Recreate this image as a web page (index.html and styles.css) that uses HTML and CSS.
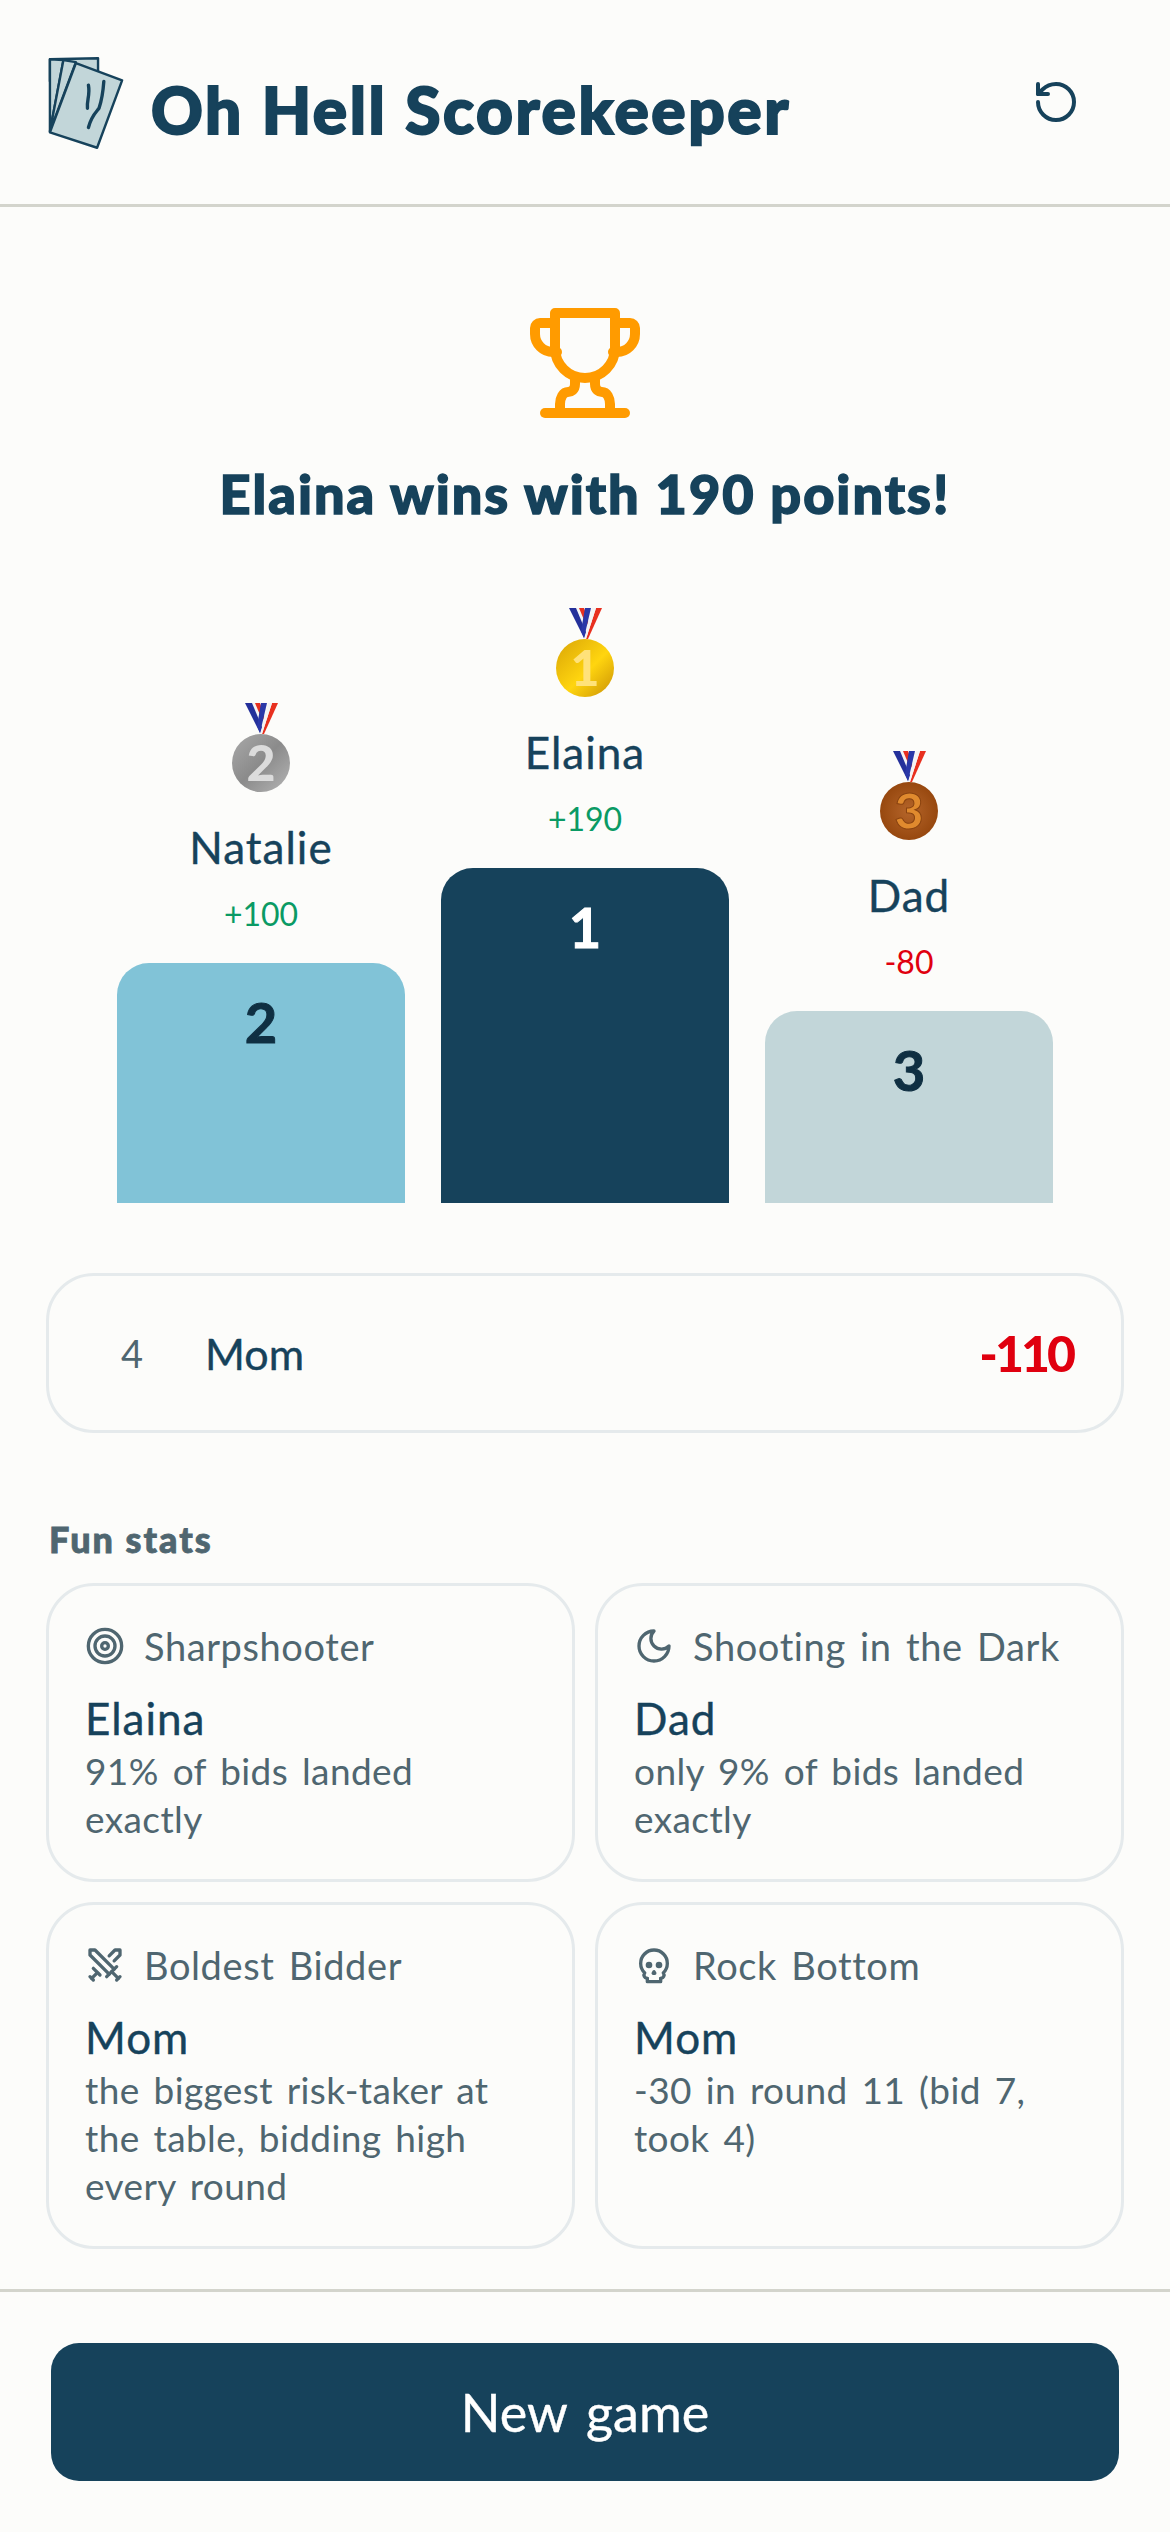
FILE: index.html
```html
<!DOCTYPE html>
<html lang="en">
<head>
  <meta charset="UTF-8" />
  <meta name="viewport" content="width=device-width, initial-scale=1.0"/>
  <title>Oh Hell Scorekeeper</title>
  <link rel="stylesheet" href="styles.css">
</head>
<body>
  <svg class="defs" width="0" height="0" aria-hidden="true">
    <defs>
      <linearGradient id="gold" x1="0" y1="0" x2="1" y2="1">
        <stop offset="0" stop-color="#d9a406"/><stop offset="0.55" stop-color="#ffd50f"/><stop offset="1" stop-color="#c98f04"/>
      </linearGradient>
      <linearGradient id="silver" x1="0" y1="0" x2="1" y2="1">
        <stop offset="0" stop-color="#a9a9a9"/><stop offset="0.5" stop-color="#8b8b8b"/><stop offset="1" stop-color="#b5b5b5"/>
      </linearGradient>
      <radialGradient id="bronze">
        <stop offset="0" stop-color="#b5652a"/><stop offset="1" stop-color="#97480f"/>
      </radialGradient>
      <symbol id="ribbon" viewBox="0 0 60 32">
        <path d="M23 0h6l5 15-3 3z" fill="#e8301f"/>
        <path d="M41 0h6L33 31h-2z" fill="#e8301f"/>
        <path d="M37 0h4L31 31h-3z" fill="#f4f4f4"/>
        <path d="M21 0h3l8 19-1 5z" fill="#f4f4f4"/>
        <path d="M14 0h7l10 24-2 6z" fill="#24309a"/>
        <path d="M30 0h6l-7 30-3-7z" fill="#2a38a8"/>
      </symbol>
    </defs>
  </svg>

  <header class="topbar">
    <div class="brand">
      <svg class="logo" viewBox="0 0 80 96" fill="#c2d6d9" stroke="#16425b" stroke-width="2.5" stroke-linejoin="round">
        <path d="M2 3l50-1v24H2z"/>
        <path d="M20 6l46 16-2 20H4z"/>
        <path d="M2 78V3l14 1z"/>
        <path d="M2 78L16 4l13 2z"/>
        <path d="M29 7l48 18-26 70-49-16z"/>
        <path d="M42 30c2 10-2 16-1 24M58 26c-1 14-3 22-5 28-3 4-8 8-11 20" fill="none" stroke-linecap="round" stroke-width="3.5"/>
      </svg>
      <h1 class="app-title">Oh Hell Scorekeeper</h1>
    </div>
    <svg class="reset" viewBox="0 0 24 24" fill="none" stroke="#16425b" stroke-width="2" stroke-linecap="round" stroke-linejoin="round">
      <path d="M3 12a9 9 0 1 0 9-9 9.75 9.75 0 0 0-6.74 2.74L3 8"/>
      <path d="M3 3v5h5"/>
    </svg>
  </header>

  <main class="content">
    <svg class="trophy" viewBox="0 0 110 110" fill="none" stroke="#ff9b00" stroke-width="10" stroke-linecap="round" stroke-linejoin="round">
      <path d="M25 5H85V40A30 30 0 0 1 25 40Z"/>
      <path d="M25 15H10A5 5 0 0 0 5 20V26A18 18 0 0 0 23 44H27"/>
      <path d="M85 15H100A5 5 0 0 1 105 20V26A18 18 0 0 1 87 44H83"/>
      <path d="M45 70V76C45 82 41 84 38 84C33 84 30 90 30 96V105"/>
      <path d="M65 70V76C65 82 69 84 72 84C77 84 80 90 80 96V105"/>
      <path d="M15 105H95"/>
    </svg>
    <h2 class="winner">Elaina wins with 190 points!</h2>

    <section class="podium">
      <div class="place">
        <svg class="medal" viewBox="0 0 60 90">
          <use href="#ribbon" width="60" height="32"/>
          <circle cx="30" cy="60" r="29" fill="url(#silver)"/>
          <text x="30" y="78" class="medal-num num-silver">2</text>
        </svg>
        <div class="place-name">Natalie</div>
        <div class="place-score pos">+100</div>
        <div class="bar bar-second">2</div>
      </div>
      <div class="place">
        <svg class="medal" viewBox="0 0 60 90">
          <use href="#ribbon" width="60" height="32"/>
          <circle cx="30" cy="60" r="29" fill="url(#gold)"/>
          <text x="30" y="78" class="medal-num num-gold">1</text>
        </svg>
        <div class="place-name">Elaina</div>
        <div class="place-score pos">+190</div>
        <div class="bar bar-first">1</div>
      </div>
      <div class="place">
        <svg class="medal" viewBox="0 0 60 90">
          <use href="#ribbon" width="60" height="32"/>
          <circle cx="30" cy="60" r="29" fill="url(#bronze)"/>
          <text x="30" y="78" class="medal-num num-bronze">3</text>
        </svg>
        <div class="place-name">Dad</div>
        <div class="place-score neg">-80</div>
        <div class="bar bar-third">3</div>
      </div>
    </section>

    <div class="rest-row">
      <span class="rest-rank">4</span>
      <span class="rest-name">Mom</span>
      <span class="rest-score">-110</span>
    </div>

    <h3 class="stats-title">Fun stats</h3>
    <section class="stats">
      <article class="stat">
        <div class="stat-label">
          <svg class="stat-icon" viewBox="0 0 24 24"><circle cx="12" cy="12" r="10"/><circle cx="12" cy="12" r="6"/><circle cx="12" cy="12" r="2"/></svg>
          Sharpshooter
        </div>
        <div class="stat-name">Elaina</div>
        <p class="stat-desc">91% of bids landed exactly</p>
      </article>
      <article class="stat">
        <div class="stat-label">
          <svg class="stat-icon" viewBox="0 0 24 24"><path d="M12 3a6 6 0 0 0 9 9 9 9 0 1 1-9-9Z"/></svg>
          Shooting in the Dark
        </div>
        <div class="stat-name">Dad</div>
        <p class="stat-desc">only 9% of bids landed exactly</p>
      </article>
      <article class="stat">
        <div class="stat-label">
          <svg class="stat-icon" viewBox="0 0 24 24">
            <path d="M14.5 17.5L3 6V3h3l11.5 11.5"/><path d="M13 19l6-6"/><path d="M16 16l4 4"/><path d="M19 21l2-2"/>
            <path d="M14.5 6.5L18 3h3v3l-3.5 3.5"/><path d="M5 14l4 4"/><path d="M7 17l-3 3"/><path d="M3 19l2 2"/>
          </svg>
          Boldest Bidder
        </div>
        <div class="stat-name">Mom</div>
        <p class="stat-desc">the biggest risk-taker at the table, bidding high every round</p>
      </article>
      <article class="stat">
        <div class="stat-label">
          <svg class="stat-icon" viewBox="0 0 24 24">
            <circle cx="9" cy="12" r="1"/><circle cx="15" cy="12" r="1"/><path d="M8 20v2h8v-2"/><path d="M12.5 17l-.5-1-.5 1h1z"/>
            <path d="M16 20a2 2 0 0 0 1.56-3.25 8 8 0 1 0-11.12 0A2 2 0 0 0 8 20"/>
          </svg>
          Rock Bottom
        </div>
        <div class="stat-name">Mom</div>
        <p class="stat-desc">-30 in round 11 (bid 7, took 4)</p>
      </article>
    </section>
  </main>

  <footer class="bottom">
    <button class="new-game">New game</button>
  </footer>
</body>
</html>
```

FILE: styles.css
```css
:root {
  --navy: #16425b;
  --sky: #81c3d7;
  --pale: #c2d6d9;
  --muted: #4f6670;
  --bg: #fcfcfa;
  --line: #e5eaec;
  --rule: #d3d4cc;
  --display: 'Lato', sans-serif;
}

html, body {
  margin: 0;
  height: 2532px;
}

body {
  display: flex;
  flex-direction: column;
  background: var(--bg);
  color: var(--navy);
  font-family: 'Lato', sans-serif;
  overflow: hidden;
}

.defs {
  position: absolute;
}

.topbar {
  flex: none;
  box-sizing: border-box;
  height: 207px;
  display: flex;
  align-items: center;
  justify-content: space-between;
  padding: 0 90px 0 48px;
  border-bottom: 3px solid var(--rule);
}

.brand {
  display: flex;
  align-items: center;
  gap: 26px;
}

.logo {
  width: 77px;
  height: 95px;
}

.app-title {
  margin: 14px 0 0;
  font-family: var(--display);
  font-weight: 900;
  font-size: 64px;
  letter-spacing: 2.6px;
  -webkit-text-stroke: 2px var(--navy);
}

.reset {
  width: 48px;
  height: 48px;
}

.content {
  flex: 1;
  display: flex;
  flex-direction: column;
  padding: 0 46px;
}

.trophy {
  width: 110px;
  height: 110px;
  margin: 101px auto 0;
}

.winner {
  margin: 46px 0 0;
  text-align: center;
  font-family: var(--display);
  font-weight: 900;
  font-size: 54px;
  line-height: 60px;
  letter-spacing: 2px;
  -webkit-text-stroke: 1.5px var(--navy);
}

.podium {
  display: flex;
  justify-content: center;
  align-items: flex-end;
  gap: 36px;
  margin-top: 84px;
}

.place {
  width: 288px;
  display: flex;
  flex-direction: column;
  align-items: center;
}

.medal {
  width: 60px;
  height: 90px;
}

.place-name {
  margin-top: 28px;
  font-size: 44px;
  line-height: 52px;
  letter-spacing: 1px;
  -webkit-text-stroke: 0.4px var(--navy);
}

.place-score {
  margin: 19px 0 27px;
  font-size: 32px;
  line-height: 44px;
}

.pos { color: #0a9a64; }
.neg { color: #e0000f; }

.bar {
  width: 100%;
  box-sizing: border-box;
  padding-top: 27px;
  border-radius: 32px 32px 0 0;
  text-align: center;
  font-size: 56px;
  line-height: 64px;
  font-weight: 700;
  color: #0f2f42;
  -webkit-text-stroke: 1px currentColor;
}

.bar-first { height: 335px; background: var(--navy); color: #fff; }
.bar-second { height: 240px; background: var(--sky); }
.bar-third { height: 192px; background: var(--pale); }

.medal-num {
  font-family: 'Lato', sans-serif;
  font-weight: 900;
  font-size: 50px;
  text-anchor: middle;
}

.num-gold { fill: #ffe27a; }
.num-silver { fill: #dcdcdc; }
.num-bronze { fill: #e08a2e; stroke: #8a4310; stroke-width: 1; }

.rest-row {
  display: flex;
  align-items: center;
  box-sizing: border-box;
  height: 160px;
  margin-top: 70px;
  padding: 0 48px 0 72px;
  border: 3px solid var(--line);
  border-radius: 48px;
}

.rest-rank {
  width: 84px;
  font-size: 38px;
  color: var(--muted);
}

.rest-name {
  flex: 1;
  font-size: 43px;
  -webkit-text-stroke: 0.4px var(--navy);
}

.rest-score {
  font-size: 50px;
  font-weight: 900;
  letter-spacing: -3px;
  color: #e0000f;
}

.stats-title {
  margin: 84px 0 0 3px;
  font-family: var(--display);
  font-weight: 900;
  font-size: 36px;
  line-height: 44px;
  letter-spacing: 2px;
  color: var(--muted);
  -webkit-text-stroke: 0.8px var(--muted);
}

.stats {
  display: grid;
  grid-template-columns: 1fr 1fr;
  gap: 20px;
  margin-top: 22px;
}

.stat {
  box-sizing: border-box;
  padding: 38px 36px 36px;
  border: 3px solid var(--line);
  border-radius: 48px;
}

.stat-label {
  display: flex;
  align-items: center;
  gap: 19px;
  font-size: 38px;
  line-height: 44px;
  letter-spacing: 0.6px;
  word-spacing: 4px;
  color: var(--muted);
}

.stat-icon {
  width: 40px;
  height: 40px;
  fill: none;
  stroke: var(--muted);
  stroke-width: 2;
  stroke-linecap: round;
  stroke-linejoin: round;
}

.stat-name {
  margin-top: 26px;
  font-size: 44px;
  line-height: 48px;
  letter-spacing: 1px;
  -webkit-text-stroke: 0.4px var(--navy);
}

.stat-desc {
  margin: 5px 0 0;
  font-size: 37px;
  line-height: 48px;
  letter-spacing: 0.4px;
  word-spacing: 4px;
  color: var(--muted);
}

.bottom {
  flex: none;
  box-sizing: border-box;
  height: 243px;
  padding: 51px 51px 0;
  border-top: 3px solid var(--rule);
}

.new-game {
  width: 100%;
  height: 138px;
  border: none;
  border-radius: 28px;
  background: var(--navy);
  color: #fff;
  font-family: 'Lato', sans-serif;
  font-size: 52px;
  word-spacing: 6px;
  -webkit-text-stroke: 0.4px #fff;
}
```
